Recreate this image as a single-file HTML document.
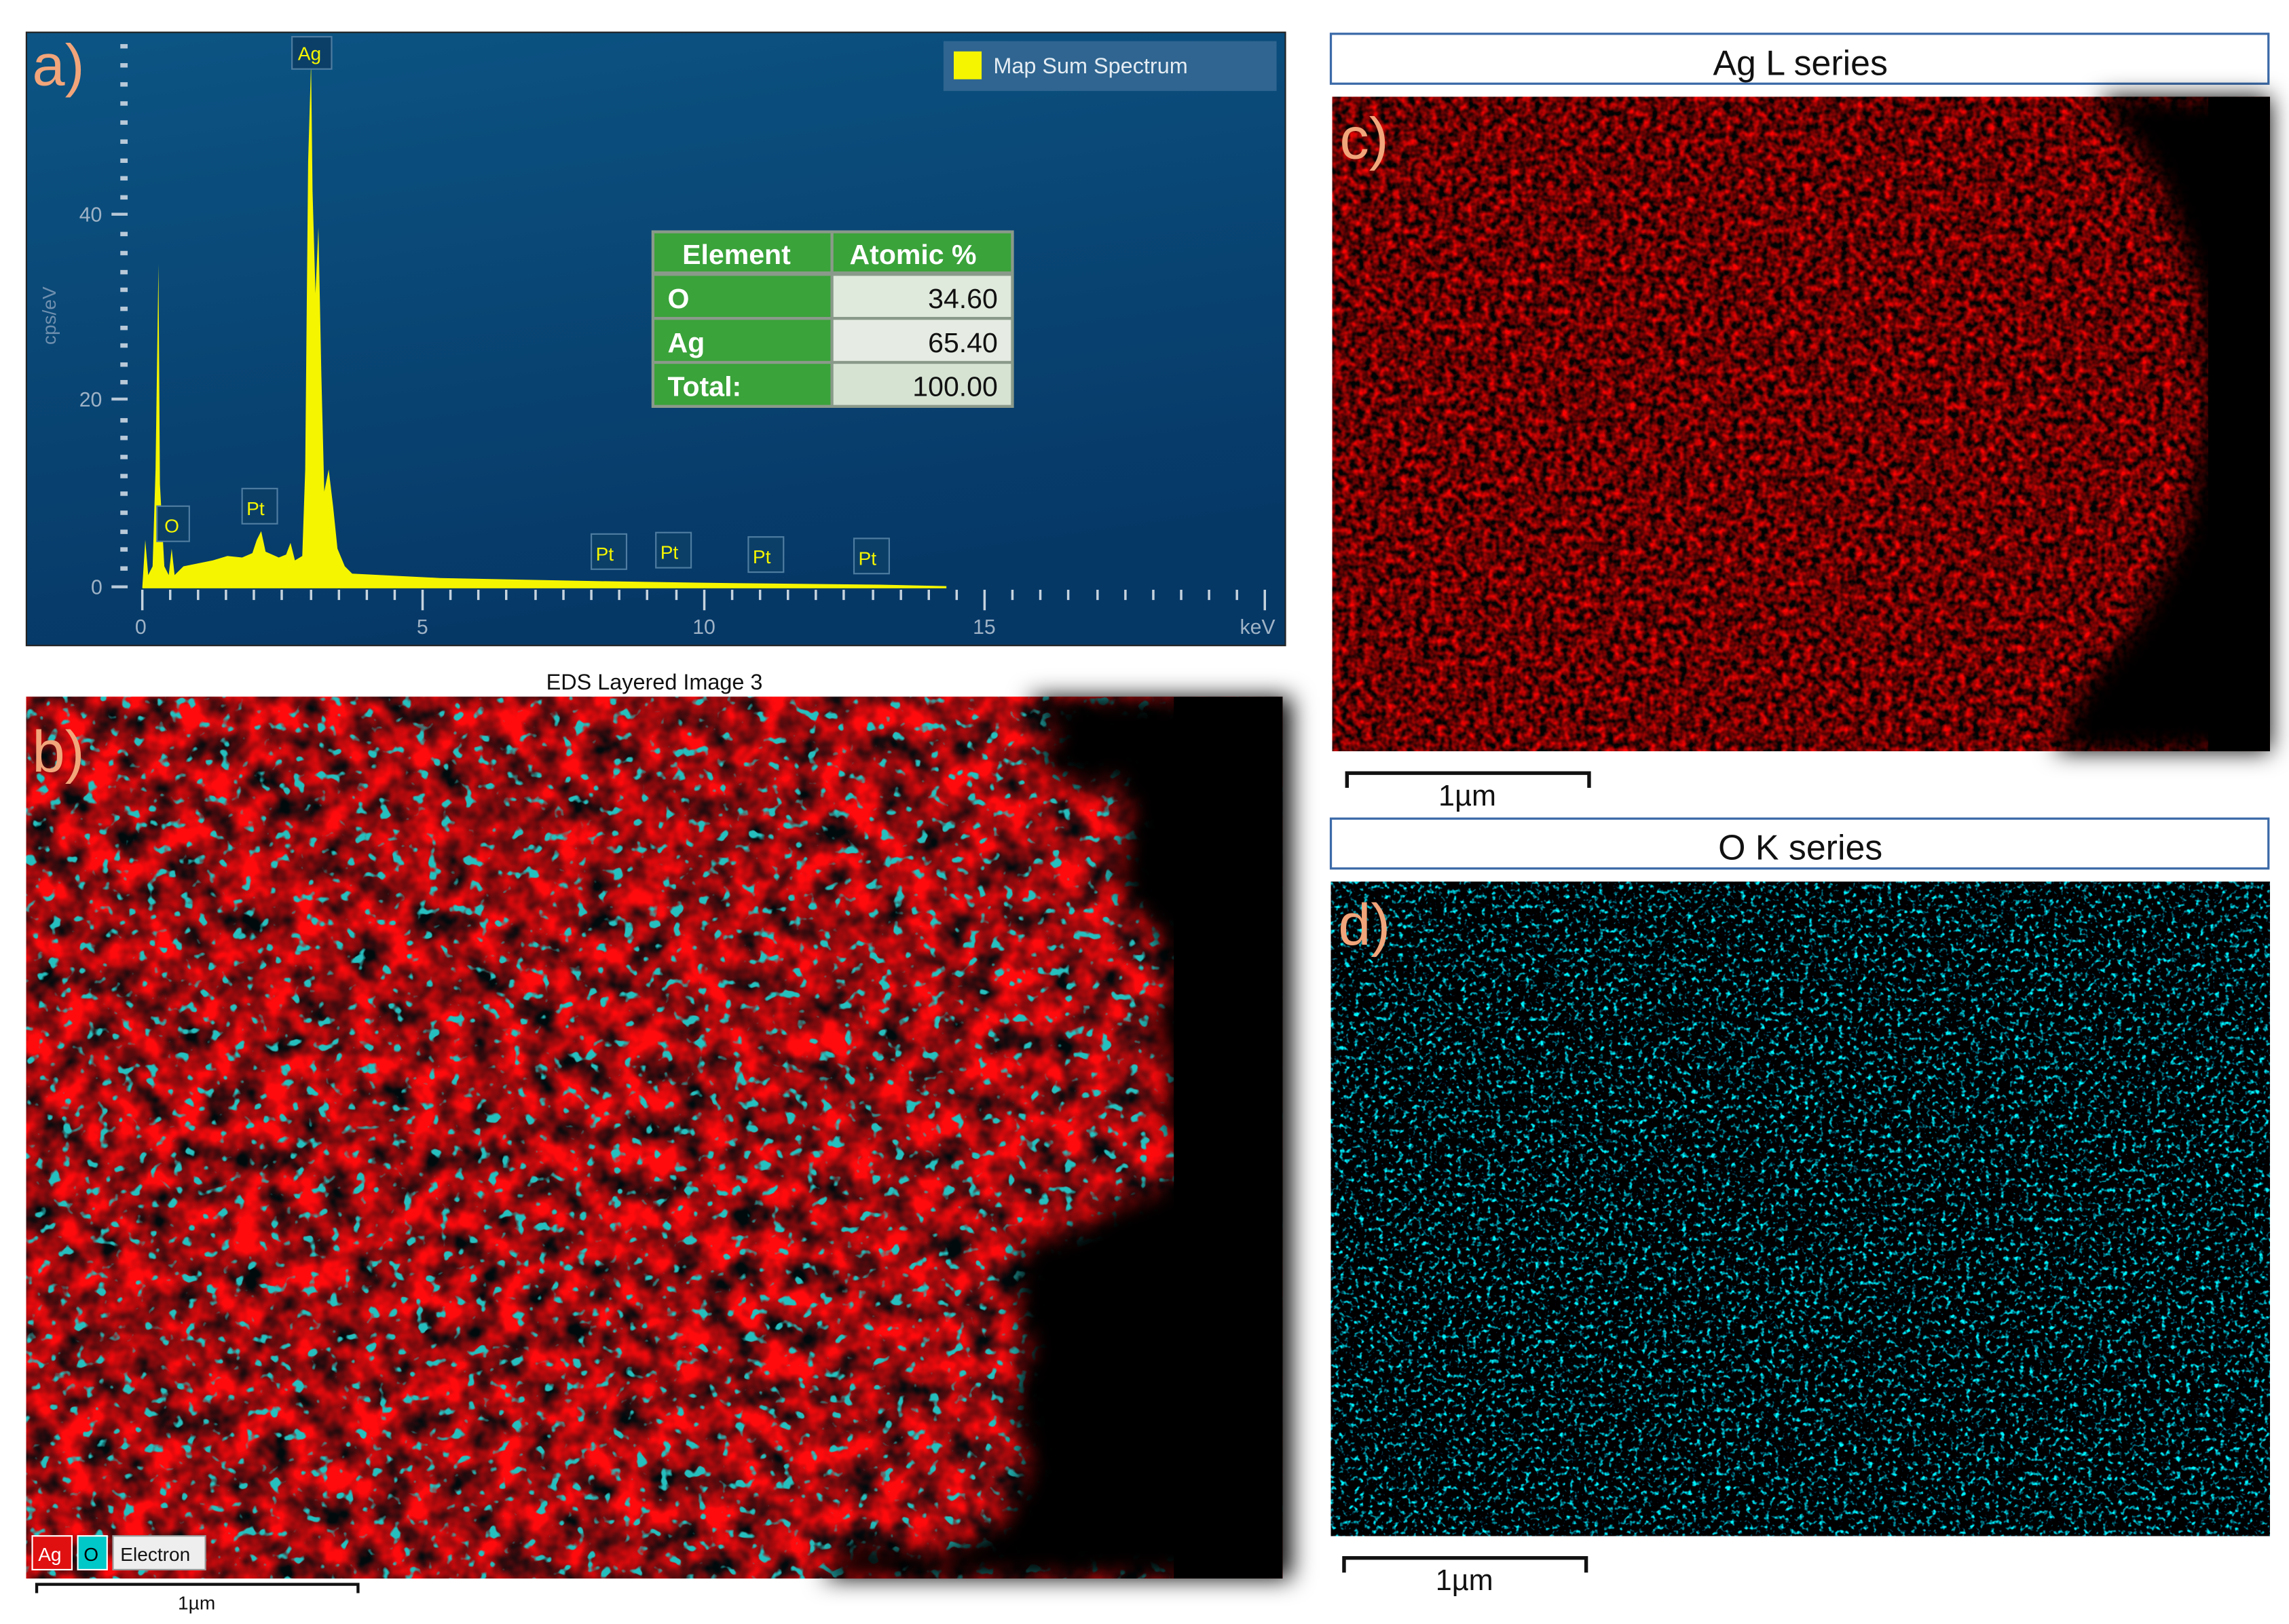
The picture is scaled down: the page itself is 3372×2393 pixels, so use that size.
<!DOCTYPE html>
<html><head><meta charset="utf-8"><style>html,body{margin:0;padding:0;background:#fff}svg{display:block}</style></head><body>
<svg width="3372" height="2393" viewBox="0 0 1560 1107" xmlns="http://www.w3.org/2000/svg" font-family="Liberation Sans, DejaVu Sans, sans-serif">
<defs>
<linearGradient id="bg" x1="0" y1="0" x2="0.3" y2="1">
<stop offset="0" stop-color="#0c5584"/><stop offset="0.5" stop-color="#094675"/><stop offset="1" stop-color="#063866"/>
</linearGradient>
<filter id="red" x="0" y="0" width="1" height="1" color-interpolation-filters="sRGB">
<feTurbulence type="fractalNoise" baseFrequency="0.2" numOctaves="2" seed="3"/>
<feColorMatrix values="1.8 0 0 0 -0.5  0 0 0 0 0.01  0 0 0 0 0.01  0 0 0 0 1"/>
</filter>
<filter id="redb" x="0" y="0" width="1" height="1" color-interpolation-filters="sRGB">
<feTurbulence type="fractalNoise" baseFrequency="0.05" numOctaves="3" seed="7"/>
<feColorMatrix values="2.0 0 0 0 -0.4  0 0 0 0 0.04  0 0 0 0 0.05  0 0 0 0 1"/>
</filter>
<filter id="cyanb" x="0" y="0" width="1" height="1" color-interpolation-filters="sRGB">
<feTurbulence type="fractalNoise" baseFrequency="0.12" numOctaves="2" seed="11"/>
<feColorMatrix values="0 0 0 0 0.15  0 0 0 0 0.75  0 0 0 0 0.75  10 0 0 0 -6.3"/>
</filter>
<filter id="cyan" x="0" y="0" width="1" height="1" color-interpolation-filters="sRGB">
<feTurbulence type="fractalNoise" baseFrequency="0.3" numOctaves="2" seed="5"/>
<feColorMatrix values="0 0 0 0 0  4 0 0 0 -2.2  4 0 0 0 -2.15  0 0 0 0 1"/>
</filter>
<filter id="blur6"><feGaussianBlur stdDeviation="8"/></filter>
</defs>

<rect x="18" y="22" width="858" height="418" fill="url(#bg)" stroke="#222" stroke-width="1"/>
<text x="22" y="58" font-size="40" fill="#f2a57a">a)</text>
<g fill="#b9c9d8">
<rect x="82" y="30" width="5" height="3"/><rect x="82" y="43" width="5" height="3"/><rect x="82" y="56" width="5" height="3"/><rect x="82" y="69" width="5" height="3"/><rect x="82" y="82" width="5" height="3"/><rect x="82" y="95" width="5" height="3"/><rect x="82" y="108" width="5" height="3"/><rect x="82" y="120" width="5" height="3"/><rect x="82" y="133" width="5" height="3"/><rect x="76" y="145" width="11" height="2"/><rect x="82" y="158" width="5" height="3"/><rect x="82" y="171" width="5" height="3"/><rect x="82" y="184" width="5" height="3"/><rect x="82" y="196" width="5" height="3"/><rect x="82" y="209" width="5" height="3"/><rect x="82" y="222" width="5" height="3"/><rect x="82" y="234" width="5" height="3"/><rect x="82" y="247" width="5" height="3"/><rect x="82" y="259" width="5" height="3"/><rect x="76" y="271" width="11" height="2"/><rect x="82" y="285" width="5" height="3"/><rect x="82" y="297" width="5" height="3"/><rect x="82" y="310" width="5" height="3"/><rect x="82" y="323" width="5" height="3"/><rect x="82" y="335" width="5" height="3"/><rect x="82" y="348" width="5" height="3"/><rect x="82" y="361" width="5" height="3"/><rect x="82" y="373" width="5" height="3"/><rect x="82" y="386" width="5" height="3"/><rect x="76" y="399" width="11" height="2"/>
</g>
<g fill="#9fb3c6" font-size="14">
<text x="54" y="151">40</text><text x="54" y="277">20</text><text x="62" y="405">0</text>
<text x="38" y="235" transform="rotate(-90 38 235)" font-size="13" fill="#6f8fae">cps/eV</text>
</g>
<g stroke="#c6d3de" stroke-width="1.6">
<path d="M97 402v14M288 402v14M480 402v14M671 402v14M862 402v14"/>
<path d="M116 402v7M135 402v7M154 402v7M173 402v7M192 402v7M212 402v7M231 402v7M250 402v7M269 402v7M307 402v7M326 402v7M345 402v7M365 402v7M384 402v7M403 402v7M422 402v7M441 402v7M461 402v7M499 402v7M518 402v7M537 402v7M556 402v7M575 402v7M595 402v7M614 402v7M633 402v7M652 402v7M690 402v7M709 402v7M728 402v7M748 402v7M767 402v7M786 402v7M805 402v7M824 402v7M843 402v7"/>
</g>
<g fill="#9fb3c6" font-size="14">
<text x="92" y="432">0</text><text x="284" y="432">5</text><text x="472" y="432">10</text><text x="663" y="432">15</text><text x="845" y="432">keV</text>
</g>
<path fill="#f5f500" d="M97,400 L99,368 L101,392 L104,386 L106,320 L108,180 L109,330 L112,386 L115,392 L117,374 L119,392 L125,386 L135,384 L145,382 L155,379 L165,380 L172,377 L175,368 L178,362 L181,376 L190,380 L195,378 L198,370 L201,382 L206,379 L208,320 L210,110 L212,42 L213,130 L215,200 L217,155 L219,255 L221,335 L224,320 L227,345 L230,374 L235,386 L240,391 L300,394 L400,396 L500,397.5 L600,398.5 L645,399.5 L645,401 L97,401 Z"/>
<g font-size="13" fill="#f5f500" stroke-width="1">
<rect x="199" y="25" width="27" height="22" fill="#0b3f68" stroke="#4f7da1"/><text x="203" y="41">Ag</text>
<rect x="107" y="345" width="22" height="24" fill="#0b3f68" stroke="#4f7da1"/><text x="112" y="363">O</text>
<rect x="165" y="333" width="24" height="24" fill="#0b3f68" stroke="#4f7da1"/><text x="168" y="351">Pt</text>
<rect x="403" y="364" width="24" height="24" fill="#0b3f68" stroke="#4f7da1"/><text x="406" y="382">Pt</text>
<rect x="447" y="363" width="24" height="24" fill="#0b3f68" stroke="#4f7da1"/><text x="450" y="381">Pt</text>
<rect x="510" y="366" width="24" height="24" fill="#0b3f68" stroke="#4f7da1"/><text x="513" y="384">Pt</text>
<rect x="582" y="367" width="24" height="24" fill="#0b3f68" stroke="#4f7da1"/><text x="585" y="385">Pt</text>
</g>
<rect x="643" y="28" width="227" height="34" fill="#2f6590"/>
<rect x="650" y="35" width="19" height="19" fill="#f5f500"/>
<text x="677" y="50" font-size="15" fill="#e4ecf3">Map Sum Spectrum</text>
<rect x="444" y="157" width="247" height="121" fill="#8a9a8a"/>
<rect x="446" y="159" width="120" height="26" fill="#3aa33a"/><rect x="568" y="159" width="121" height="26" fill="#3aa33a"/>
<rect x="446" y="188" width="120" height="28" fill="#3aa33a"/><rect x="568" y="188" width="121" height="28" fill="#dfe9dc"/>
<rect x="446" y="218" width="120" height="28" fill="#3aa33a"/><rect x="568" y="218" width="121" height="28" fill="#e6ece3"/>
<rect x="446" y="248" width="120" height="28" fill="#3aa33a"/><rect x="568" y="248" width="121" height="28" fill="#d6e3d3"/>
<g font-size="19" font-weight="bold" fill="#fff">
<text x="465" y="180">Element</text><text x="579" y="180">Atomic %</text>
<text x="455" y="210">O</text><text x="455" y="240">Ag</text><text x="455" y="270">Total:</text>
</g>
<g font-size="19" fill="#111" text-anchor="end">
<text x="680" y="210">34.60</text><text x="680" y="240">65.40</text><text x="680" y="270">100.00</text>
</g>

<text x="446" y="470" font-size="15" fill="#111" text-anchor="middle">EDS Layered Image 3</text>
<rect x="18" y="475" width="856" height="601" fill="#000"/>
<rect x="18" y="475" width="856" height="601" filter="url(#redb)"/>
<rect x="18" y="475" width="856" height="601" filter="url(#cyanb)"/>
<path d="M700,475 L720,500 L705,520 L740,540 L760,530 L770,560 L760,600 L790,640 L800,670 L785,700 L800,730 L790,760 L815,790 L790,810 L760,820 L730,840 L700,845 L690,880 L700,920 L690,960 L700,1000 L680,1040 L640,1060 L580,1050 L560,1076 L880,1076 L880,475 Z" fill="#000" filter="url(#blur6)"/>
<rect x="800" y="475" width="74" height="601" fill="#000"/>
<text x="22" y="526" font-size="40" fill="#f2a57a">b)</text>
<rect x="22" y="1047" width="27" height="23" fill="#e01010" stroke="#fff"/><text x="26" y="1064" font-size="13" fill="#fff">Ag</text>
<rect x="53" y="1047" width="20" height="23" fill="#00c8c8" stroke="#fff"/><text x="57" y="1064" font-size="13" fill="#000">O</text>
<rect x="77" y="1047" width="63" height="23" fill="#eee" stroke="#999"/><text x="82" y="1064" font-size="13" fill="#111">Electron</text>
<path d="M25,1086 V1080 H244 V1086" stroke="#111" stroke-width="2" fill="none"/>
<text x="134" y="1097" font-size="13" fill="#111" text-anchor="middle">1µm</text>

<rect x="907" y="23" width="639" height="34" fill="#fff" stroke="#3b6aa8" stroke-width="1.5"/>
<text x="1227" y="51" font-size="24" fill="#111" text-anchor="middle">Ag L series</text>
<rect x="908" y="66" width="639" height="446" fill="#000"/>
<rect x="908" y="66" width="639" height="446" filter="url(#red)"/>
<path d="M1430,66 L1470,120 L1500,200 L1505,280 L1490,360 L1460,420 L1420,470 L1400,512 L1547,512 L1547,66 Z" fill="#000" filter="url(#blur6)"/>
<rect x="1505" y="66" width="42" height="446" fill="#000"/>
<text x="913" y="108" font-size="40" fill="#f2a57a">c)</text>
<path d="M918,537 V527 H1083 V537" stroke="#111" stroke-width="2.5" fill="none"/>
<text x="1000" y="549" font-size="20" fill="#111" text-anchor="middle">1µm</text>

<rect x="907" y="558" width="639" height="34" fill="#fff" stroke="#3b6aa8" stroke-width="1.5"/>
<text x="1227" y="586" font-size="24" fill="#111" text-anchor="middle">O K series</text>
<rect x="907" y="601" width="640" height="446" fill="#000"/>
<rect x="907" y="601" width="640" height="446" filter="url(#cyan)"/>
<text x="912" y="644" font-size="40" fill="#f2a57a">d)</text>
<path d="M916,1072 V1062 H1081 V1072" stroke="#111" stroke-width="2.5" fill="none"/>
<text x="998" y="1084" font-size="20" fill="#111" text-anchor="middle">1µm</text>
</svg>
</body></html>
